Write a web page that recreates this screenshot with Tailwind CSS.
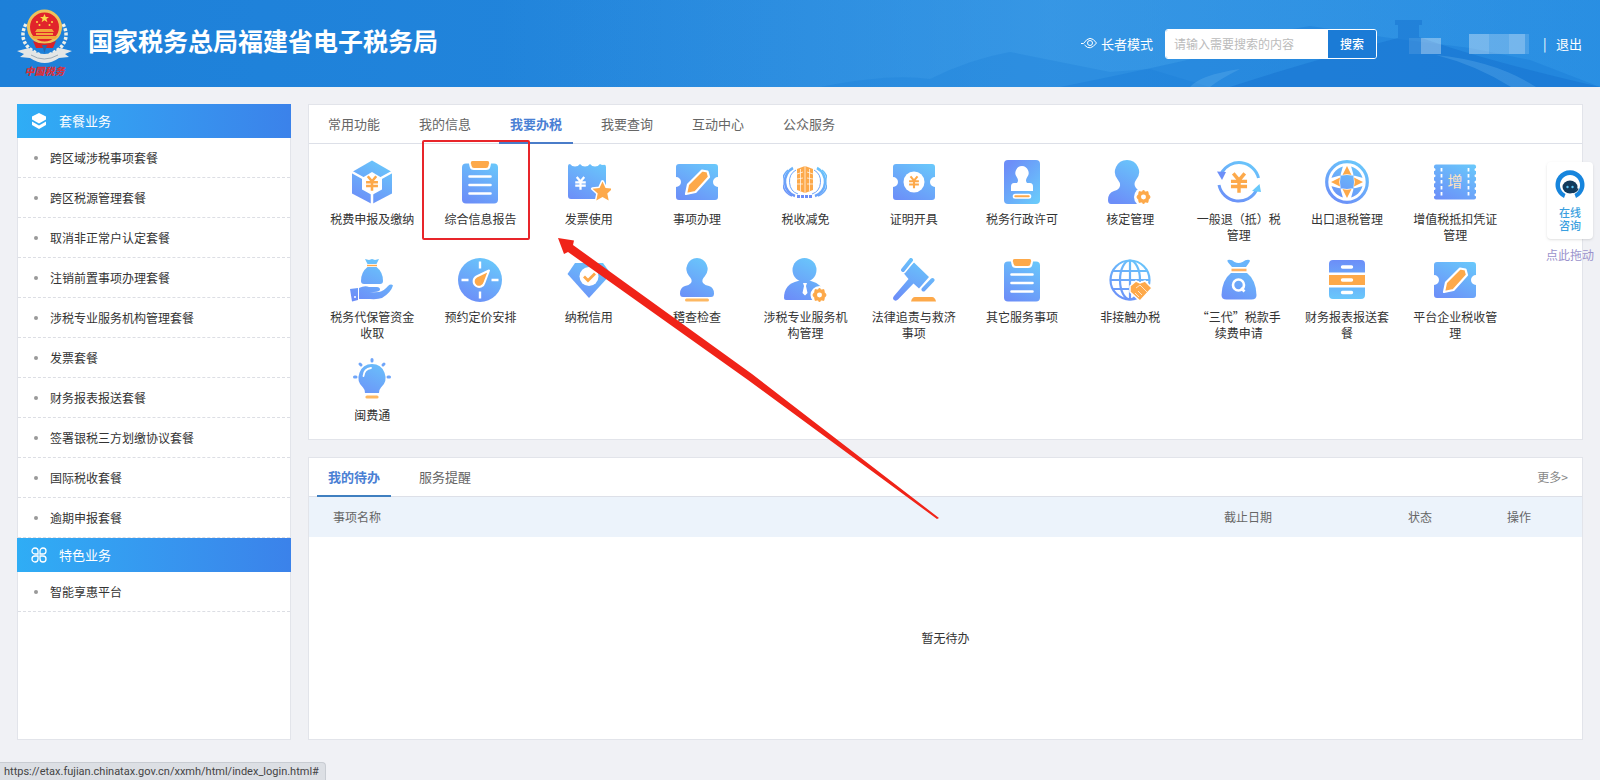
<!DOCTYPE html>
<html lang="zh-CN">

<head>
    <meta charset="UTF-8">
    <meta name="viewport" content="width=device-width, initial-scale=1.0">
    <title>国家税务总局福建省电子税务局</title>
    <script src="https://cdn.jsdelivr.net/npm/@tailwindcss/browser@4"></script>
    <style>
        body {
            font-family: "Noto Sans CJK SC", "Noto Sans", sans-serif;
        }
    </style>
</head>

<body class="relative flex min-h-screen flex-col bg-[#f0f1f5] text-xs text-[#333]">

    <!-- Icon sprite, every symbol is drawn on a 44x44 grid -->
    <svg class="absolute size-0" aria-hidden="true">
        <defs>
            <linearGradient id="g" gradientUnits="userSpaceOnUse" x1="34" y1="0" x2="12" y2="44">
                <stop offset="0" stop-color="#69c9fb" />
                <stop offset="1" stop-color="#6c8ef8" />
            </linearGradient>
            <linearGradient id="gr" gradientUnits="userSpaceOnUse" x1="6" y1="8" x2="40" y2="38">
                <stop offset="0" stop-color="#6c8ef8" />
                <stop offset="1" stop-color="#69c9fb" />
            </linearGradient>
            <linearGradient id="gd" gradientUnits="userSpaceOnUse" x1="22" y1="2" x2="22" y2="42">
                <stop offset="0" stop-color="#6c8ef8" />
                <stop offset="1" stop-color="#69c9fb" />
            </linearGradient>
        </defs>
        <symbol id="yen" viewBox="0 0 20 20">
            <path d="M5 2l5 6 5-6M3 9h14M3 13.500h14M10 8v11" fill="none" stroke="currentColor" stroke-width="3" />
        </symbol>
        <symbol id="gear" viewBox="0 0 18 18">
            <path d="M9 0l2.300 2.600 3.400-.6.6 3.400L18 9l-2.700 3.600-.6 3.400-3.400-.6L9 18l-2.300-2.600-3.400.6-.6-3.400L0 9l2.700-3.600.6-3.400 3.400.6z" fill="#fda94a" stroke="#fda94a" stroke-linejoin="round" />
            <circle cx="9" cy="9" r="3.200" fill="#fff" />
        </symbol>
        <symbol id="cube" viewBox="0 0 44 44">
            <path d="M22 0.500L42 12v21.500L22 44 2 33.500V12z" fill="url(#g)" />
            <path d="M1 11.500L22 23 43 11.500M22 23v21" fill="none" stroke="#fff" stroke-width="2.500" />
            <path d="M22 12l10 6v11.500l-10 5.500-10-5.500V18z" fill="#fff" />
            <use href="#yen" x="13.500" y="14.500" width="17" height="17" color="#fda94a" />
        </symbol>
        <symbol id="clipboard" viewBox="0 0 44 44">
            <rect x="4" y="3.500" width="36" height="40" rx="4" fill="url(#g)" />
            <path d="M14.500 0h15q3 0 2.500 3.500L31.500 6q-.5 3-3.500 3H16q-3 0-3.500-3L12 3.500Q11.500 0 14.500 0z" fill="#fda94a" stroke="#fff" stroke-width="2" />
            <path d="M11.500 16.500h21M11.500 25h21M11.500 33.500h21" stroke="#fff" stroke-width="2.600" stroke-linecap="round" />
        </symbol>
        <symbol id="invoice" viewBox="0 0 44 44">
            <path d="M1 6q0-2 2-2 2 2.500 5 2.500T13 4q2 2.500 5 2.500T23 4q2 2.500 5 2.500T33 4q1 1 3 1Q39 4 39 7v32H4q-3 0-3-3z" fill="url(#g)" />
            <use href="#yen" x="6" y="15" width="15" height="16" color="#fff" />
            <path d="M36 21l3 6.400 7 .8-5.200 4.800 1.400 7L36 36.500 29.800 40l1.400-7L26 28.200l7-.8z" transform="translate(-.5 .5)" fill="#fda94a" stroke="#fff" stroke-width="3" paint-order="stroke" stroke-linejoin="round" />
        </symbol>
        <symbol id="ticket" viewBox="0 0 44 44">
            <path d="M4 4h36q3 0 3 3v10a4.800 4.800 0 0 0 0 10v10q0 3-3 3H4q-3 0-3-3V27a4.800 4.800 0 0 0 0-10V7q0-3 3-3z" fill="url(#g)" />
            <path d="M27 10.500l5.500 1 1.500 5.500-13.500 15-9.500 2 2-9.500z" fill="#fda94a" stroke="#fff" stroke-width="2.200" stroke-linejoin="round" />
        </symbol>
        <symbol id="barrel" viewBox="0 0 44 44">
            <path d="M10 8a14 15 0 0 0 2 28M34 8a14 15 0 0 1-2 28" fill="none" stroke="url(#g)" stroke-width="2.600" />
            <path d="M5 10a14 15 0 0 0 4 26M39 10a14 15 0 0 1-4 26" fill="none" stroke="url(#g)" stroke-width="1.600" />
            <path d="M13 10a12 13 0 0 0 2 24M31 10a12 13 0 0 1-2 24" fill="none" stroke="#6fa5f9" stroke-width="1" />
            <path d="M14 9l8-3 8 3v21l-8 3-8-3z" fill="#fda94a" />
            <path d="M14 14l6-2M14 19l6-1M14 24h6M24 12l6 2M24 18l6 1M24 24h6M22 6v28M17.500 9v22M26.500 9v22" stroke="#fff" stroke-width=".7" />
            <path d="M14 36.500h16" stroke="#6c8ef8" stroke-width="3" stroke-dasharray="3 1" />
        </symbol>
        <symbol id="coin" viewBox="0 0 44 44">
            <path d="M4 4h36q3 0 3 3v10a4.800 4.800 0 0 0 0 10v10q0 3-3 3H4q-3 0-3-3V27a4.800 4.800 0 0 0 0-10V7q0-3 3-3z" fill="url(#g)" />
            <circle cx="22" cy="22" r="10.500" fill="#fff" />
            <use href="#yen" x="15" y="15" width="14" height="14" color="#fda94a" />
        </symbol>
        <symbol id="permit" viewBox="0 0 44 44">
            <rect x="4" y="0" width="36" height="44" rx="4" fill="url(#gr)" />
            <path d="M22 6a7 7 0 0 1 5 11.500q-2 3 0 5.500h3q3 0 3 3.500V31H11v-4.500q0-3.500 3-3.500h3q2-2.500 0-5.500A7 7 0 0 1 22 6z" fill="#fff" />
            <rect x="13.500" y="34.500" width="17" height="3.500" rx="1.700" fill="#fda94a" stroke="#fff" stroke-width="1.600" />
        </symbol>
        <symbol id="usergear" viewBox="0 0 44 44">
            <path d="M19 0a12 12 0 0 1 9 20q-3 4 0 8l8 8-4 8H3q-3 0-3-4 0-7 6-9 5-1 6-5 .5-3-2-6A12 12 0 0 1 19 0z" fill="url(#g)" />
            <circle cx="35.500" cy="37" r="9.500" fill="#fff" />
            <use href="#gear" x="28.500" y="30" width="14" height="14" />
        </symbol>
        <symbol id="refund" viewBox="0 0 44 44">
            <path d="M41.500 18A20 20 0 0 0 4.500 13M2 25a20 20 0 0 0 37.500 5" fill="none" stroke="url(#g)" stroke-width="3" />
            <path d="M0 11.500l9 .5-4 8z" fill="#6c8ef8" />
            <path d="M44 32l-9-1 7.500-7z" fill="#69c9fb" />
            <use href="#yen" x="10" y="11" width="24" height="23" color="#fda94a" />
        </symbol>
        <symbol id="globe" viewBox="0 0 44 44">
            <circle cx="22" cy="22" r="20.300" fill="none" stroke="url(#g)" stroke-width="3.200" />
            <circle cx="22" cy="22" r="16" fill="url(#g)" />
            <path d="M18 6Q12 22 18 38h8q6-16 0-32zM6 18q16-6 32 0v8q-16 6-32 0z" fill="#fff" />
            <path d="M22 6l4.500 9q-4.500-1.500-9 0zM22 38l4.500-9q-4.500 1.500-9 0zM6 22l9-4.500q-1.500 4.500 0 9zM38 22l-9-4.500q1.500 4.500 0 9z" fill="#fda94a" />
            <path d="M17.500 17.500q4.500-1 9 0 1 4.500 0 9-4.500 1-9 0-1-4.500 0-9z" fill="url(#g)" />
        </symbol>
        <symbol id="stub" viewBox="0 0 44 44">
            <rect x="1" y="4.500" width="42" height="35" rx="2" fill="url(#g)" />
            <path d="M1 9.500v27M43 9.500v27" stroke="#fff" stroke-width="3" stroke-linecap="round" stroke-dasharray="0 6.300" />
            <path d="M8.500 8v29M35.500 8v29" stroke="#fff" stroke-width="1.800" stroke-dasharray="3.500 2.500" />
        </symbol>
        <symbol id="handbag" viewBox="0 0 44 44">
            <path d="M15 1l4 1 3-1 3 1 4-1-2.500 5h-9z" fill="#69c0fb" />
            <path d="M17 7.500h10" stroke="#fda94a" stroke-width="1.400" />
            <path d="M17.500 9h9Q33 14 33 23q0 3-3 3H14q-3 0-3-3 0-9 6.500-14z" fill="url(#g)" />
            <path d="M0 31l8-1v12l-6 1.500zM9 30q6-3 10-1h8q3 0 3 2.500 0 2-6 2.500l-4 .5 9-.5q5-1 9-6 3-2.500 5-.5-2 7-11 12.500-4 1.500-12 1H9z" fill="url(#g)" />
            <circle cx="5" cy="39" r="1" fill="#fff" />
        </symbol>
        <symbol id="gauge" viewBox="0 0 44 44">
            <circle cx="22" cy="22" r="22" fill="url(#g)" />
            <path d="M22 3.500v7M22 33.500v7M3.500 22h7M33.500 22h7" stroke="#fff" stroke-width="2.400" />
            <path d="M31 12.500l-4.500 12a5.500 5.500 0 1 1-8-6z" fill="#fda94a" stroke="#fff" stroke-width="2" stroke-linejoin="round" />
        </symbol>
        <symbol id="diamond" viewBox="0 0 44 44">
            <path d="M8 5h28l8 11-22 24L.5 16z" fill="url(#g)" />
            <circle cx="22" cy="18.500" r="9.500" fill="#fff" />
            <path d="M17 18.500l4 4 7-7" fill="none" stroke="#fda94a" stroke-width="2.800" />
        </symbol>
        <symbol id="stamp" viewBox="0 0 44 44">
            <path d="M22 0a11 11 0 0 1 8 18q-4 4-2 7 2 2.500 6 3 5 1.500 5 7.500 0 3.500-3 3.500H8q-3 0-3-3.500 0-6 5-7.500 4-.5 6-3 2-3-2-7A11 11 0 0 1 22 0z" fill="url(#g)" />
            <path d="M11.500 42h21" stroke="#fdb862" stroke-width="3" stroke-linecap="round" />
        </symbol>
        <symbol id="agent" viewBox="0 0 44 44">
            <circle cx="21.500" cy="12" r="12" fill="url(#g)" />
            <path d="M1 40q0-14 14-17h13q12 3 13 14l-5 5H3q-2 0-2-2z" fill="url(#g)" />
            <path d="M20 25h4l-1 3 1.500 7-2.500 2.500-2.500-2.500 1.500-7z" fill="#fff" />
            <circle cx="36.500" cy="37" r="9" fill="#fff" />
            <use href="#gear" x="29.500" y="30" width="14" height="14" />
        </symbol>
        <symbol id="gavel" viewBox="0 0 44 44">
            <path d="M22 4.500L37 19l-10 11.500-5.500-5L6 41.500q-2 2-4 .5t0-4L16.500 21 11.500 15z" fill="url(#g)" />
            <path d="M11 12l8-10M31.500 31.500L40.500 22" stroke="#fff" stroke-width="7" stroke-linecap="round" />
            <path d="M11 12l8-10M31.500 31.500L40.500 22" stroke="url(#g)" stroke-width="4" stroke-linecap="round" />
            <path d="M19 43.500q1-4.500 4-4.500h17q3 0 4 4.500z" fill="#fda94a" />
        </symbol>
        <symbol id="world" viewBox="0 0 44 44">
            <g fill="none" stroke="url(#g)" stroke-width="2.200">
                <circle cx="22" cy="22" r="19.500" />
                <ellipse cx="22" cy="22" rx="10" ry="19.500" />
                <path d="M22 2.500V41.500M2.500 22H41.500M5 13h34M5 31h34" />
            </g>
            <path d="M22 28l6-5 4 2 5-2 7 7-12 13-10-9z" fill="#fda94a" stroke="#fff" stroke-width="1.500" />
            <path d="M28 30l4-3 8 8M27 35l4 4M30 33l4 4" fill="none" stroke="#fff" stroke-width=".7" />
        </symbol>
        <symbol id="searchbag" viewBox="0 0 44 44">
            <path d="M10.500 2q4-1 7 2 4 2 8 0 4-3 7-2 1 1-1 3.500L29 9H15l-3-3.500q-2-2-1.500-3.500z" fill="#69b4fb" />
            <path d="M14.500 12h15" stroke="#fdb366" stroke-width="2.600" />
            <path d="M14 15h16q9 7 9.500 22 0 4.500-5 4.500h-25q-5 0-5-4.500Q5 22 14 15z" fill="url(#g)" />
            <circle cx="21.500" cy="27" r="5.500" fill="none" stroke="#fff" stroke-width="2.600" />
            <path d="M24 30l3.500 3.500" stroke="#fff" stroke-width="2.600" />
        </symbol>
        <symbol id="drawers" viewBox="0 0 44 44">
            <path d="M4 14.500V6q0-4 4-4h28q4 0 4 4v8.500zM4 29.500h36V37q0 4-4 4H8q-4 0-4-4z" fill="url(#gd)" />
            <path d="M4 17h36v10H4z" fill="#fda94a" />
            <path d="M17.500 9h9M17.500 22h9M17.500 34.500h9" stroke="#fff" stroke-width="3.400" stroke-linecap="round" />
        </symbol>
        <symbol id="bulb" viewBox="0 0 44 44">
            <path d="M22 8a13.500 13.500 0 0 1 9 23.500q-2 2-2 5.500H15q0-3.500-2-5.500A13.500 13.500 0 0 1 22 8z" fill="url(#g)" />
            <path d="M13.500 20q.5-7 7.500-8" fill="none" stroke="#fff" stroke-width="1.800" stroke-linecap="round" />
            <path d="M17 41h10" stroke="#fdb862" stroke-width="3.200" stroke-linecap="round" />
            <path d="M22 3.500v1.500M10 8l1 1M34 8l-1 1M4.500 21H6M38 21h1.500" stroke="#6fa5f9" stroke-width="3" stroke-linecap="round" />
        </symbol>
    </svg>

    <header class="relative flex h-[87px] items-center justify-between bg-linear-to-r from-[#1d80d9] via-[#2386dc] to-[#2189e0] pr-[18px] pl-[17px]">
        <!-- Mountains and wall tower -->
        <svg class="absolute inset-0 size-full" viewBox="0 0 1600 87" preserveAspectRatio="xMaxYMax slice" aria-hidden="true">
            <defs>
                <linearGradient id="sky" x1="0" x2="1">
                    <stop offset="0" stop-color="#4aa6ec" stop-opacity="0" />
                    <stop offset=".5" stop-color="#4aa6ec" stop-opacity=".5" />
                    <stop offset="1" stop-color="#4aa6ec" stop-opacity=".2" />
                </linearGradient>
            </defs>
            <path d="M500 0h1100v87H500z" fill="url(#sky)" />
            <path d="M820 87q70-14 110-8 40-20 80-27l40 8 60 12 40-3 60 18z" fill="#1b7dd8" opacity=".3" />
            <path d="M1060 87q80-16 140-30 60-24 110-31 40 6 80 12l80 10 60 12 70 27z" fill="#1a7ad6" opacity=".4" />
            <path d="M1395 20h27v5h-3v12q60 22 181 50h-370q80-26 168-49V25h-3z" fill="#1672cf" opacity=".5" />
            <path d="M1436 55q40 10 75 32h25q-40-26-100-32zM1190 87q10-12 50-18-20 10-30 18z" fill="#6bb6f0" opacity=".3" />
        </svg>

        <div class="relative flex items-center gap-4">
            <svg class="h-[70px] w-[55px]" viewBox="0 0 55 70" role="img" aria-label="中国税务">
                <g fill="none" stroke="#eef0ea" stroke-width="3.500" stroke-dasharray="3 1.500">
                    <path d="M9 15Q2 28 11 38q6 6 15 9" />
                    <path d="M46 15q7 13-2 23-6 6-15 9" />
                </g>
                <circle cx="27.500" cy="18" r="16" fill="#e1242b" stroke="#eec25b" stroke-width="3" />
                <path d="M27.500 5l1.300 3h3.200l-2.600 2 1 3.200-2.900-2-2.900 2 1-3.200-2.600-2h3.200z" fill="#fbd94a" />
                <g fill="#fbd94a">
                    <circle cx="20" cy="13" r="1" />
                    <circle cx="22.500" cy="16" r="1" />
                    <circle cx="32.500" cy="16" r="1" />
                    <circle cx="35" cy="13" r="1" />
                </g>
                <path d="M20 20h15l2 3H18zM19 24h17v2H19zM14 27h27l-3 3H17z" fill="#f3a73a" />
                <path d="M16 32q11.500 5 23 0l-3 7H19z" fill="#d92228" />
                <path d="M25 36h5l-2.500 8z" fill="#2c64a8" />
                <path d="M0 42l12-3q15 12 31 0l12 3-7 3 4 3-10 1q-14 10-29 0l-10-1 4-3z" fill="#e3e6e6" />
                <path d="M14 46q13 8 27 0" fill="none" stroke="#9eabb5" />
                <text x="27.500" y="66" text-anchor="middle" font-size="10" font-weight="900" font-style="italic" fill="#d8303a">中国税务</text>
            </svg>
            <h1 class="pb-2 text-[25px] leading-8 font-bold text-white">国家税务总局福建省电子税务局</h1>
        </div>

        <div class="relative flex items-center text-[13px] text-white">
            <a href="#" class="flex items-center gap-1">
                <svg class="h-3 w-4" viewBox="0 0 16 12" fill="none" stroke="#fff" aria-hidden="true">
                    <path d="M0 6.500h2.500Q9-3.500 15.500 6 9 14.500 3.500 8" />
                    <circle cx="9" cy="6" r="2.500" />
                </svg>
                长者模式
            </a>
            <form class="ml-3 flex h-[30px] overflow-hidden rounded-[3px] border border-white text-xs">
                <input type="text" aria-label="搜索内容" placeholder="请输入需要搜索的内容" class="w-[162px] bg-white px-2 text-[#333] outline-none placeholder:text-[#bbb]">
                <button type="button" class="w-12 bg-[#1b7bd6] font-medium">搜索</button>
            </form>
            <!-- Masked user name -->
            <div class="ml-8 flex w-[122px] gap-7" aria-hidden="true">
                <div class="flex h-5 w-8 items-end">
                    <span class="h-4 w-3 bg-white/10"></span>
                    <span class="h-4 w-5 bg-white/35"></span>
                </div>
                <div class="flex h-5 w-[62px]">
                    <span class="h-5 w-5 bg-white/35"></span>
                    <span class="h-5 w-5 bg-white/25"></span>
                    <span class="h-5 w-4 bg-white/35"></span>
                    <span class="h-5 w-1 bg-white/15"></span>
                </div>
            </div>
            <span class="ml-3 w-[13px]">|</span>
            <a href="#">退出</a>
        </div>
    </header>

    <div class="flex gap-[17px] px-[17px] pt-[17px] pb-10">
        <aside class="w-[274px] shrink-0 border border-t-0 border-[#e2e4ea] bg-white">
            <h2 class="-mx-px flex h-[34px] items-center gap-3 bg-linear-to-r from-[#2fadf5] to-[#3b82ea] px-[14px] text-[13px] text-white">
                <svg class="size-4" viewBox="0 0 16 16" aria-hidden="true">
                    <path d="M8 0l7 3.500v3L8 10.500 1 6.500v-3z" fill="#fff" />
                    <path d="M1 8.500l7 4 7-4v3.500l-7 4-7-4z" fill="#fff" />
                </svg>
                套餐业务
            </h2>
            <ul id="packages"></ul>
            <h2 class="-mx-px flex h-[34px] items-center gap-3 bg-linear-to-r from-[#2fadf5] to-[#3b82ea] px-[14px] text-[13px] text-white">
                <svg class="size-4" viewBox="0 0 16 16" fill="none" stroke="#fff" stroke-width="1.300" aria-hidden="true">
                    <path d="M7 7H4a3 3 0 1 1 3-3zM9 7V4a3 3 0 1 1 3 3zM7 9v3a3 3 0 1 1-3-3zM9 9h3a3 3 0 1 1-3 3z" />
                </svg>
                特色业务
            </h2>
            <ul id="features"></ul>
        </aside>

        <main class="flex min-w-0 flex-1 flex-col gap-[17px]">
            <section class="border border-[#e2e4ea] bg-white">
                <nav class="flex h-[39px] gap-[17px] border-b border-[#dde0e8] px-2 text-[13px] text-[#666]">
                    <a href="#" class="flex w-[74px] items-center justify-center">常用功能</a>
                    <a href="#" class="flex w-[74px] items-center justify-center">我的信息</a>
                    <a href="#" class="-mb-px flex w-[74px] items-center justify-center border-b-2 border-[#4a7cc9] font-bold text-[#4a80d4]">我要办税</a>
                    <a href="#" class="flex w-[74px] items-center justify-center">我要查询</a>
                    <a href="#" class="flex w-[74px] items-center justify-center">互动中心</a>
                    <a href="#" class="flex w-[74px] items-center justify-center">公众服务</a>
                </nav>
                <div id="services" class="grid w-[94.3%] grid-cols-11 gap-y-[15px] py-4 pl-[9px]"></div>
            </section>

            <section class="border border-[#e2e4ea] bg-white">
                <nav class="flex h-[39px] gap-[17px] border-b border-[#dde0e8] px-2 text-[13px] text-[#666]">
                    <a href="#" class="-mb-px flex w-[74px] items-center justify-center border-b-2 border-[#3f7fc0] font-bold text-[#4a80d4]">我的待办</a>
                    <a href="#" class="flex w-[74px] items-center justify-center">服务提醒</a>
                    <a href="#" class="mr-1.5 ml-auto flex items-center text-xs text-[#888]">更多&gt;</a>
                </nav>
                <table class="w-full table-fixed text-left text-[#666]">
                    <thead class="bg-[#ecf3fb]">
                        <tr class="h-10">
                            <th class="pl-6 font-normal">事项名称</th>
                            <th class="w-[184px] font-normal">截止日期</th>
                            <th class="w-[99px] font-normal">状态</th>
                            <th class="w-[75px] font-normal">操作</th>
                        </tr>
                    </thead>
                    <tbody>
                        <tr>
                            <td colspan="4" class="h-[202px] text-center text-[#333]">暂无待办</td>
                        </tr>
                    </tbody>
                </table>
            </section>
        </main>
    </div>

    <!-- Floating online help -->
    <div class="absolute top-[162px] right-1.5 flex flex-col items-center">
        <a href="#" class="flex h-[77px] w-[46px] flex-col items-center rounded-sm bg-white pt-2 text-[11px] leading-[13px] font-medium text-[#3a9fe0] shadow">
            <svg class="mb-1.5 size-[30px]" viewBox="0 0 30 30" aria-hidden="true">
                <path d="M9 28A14.500 14.500 0 1 1 21 28l-1.500-4a10 10 0 1 0-9 0z" fill="#1785dd" />
                <ellipse cx="15" cy="17" rx="7.500" ry="6.500" fill="#123a5c" />
                <circle cx="12.500" cy="17" r="1.200" fill="#5cc4f5" />
                <circle cx="17.500" cy="17" r="1.200" fill="#5cc4f5" />
                <path d="M18 22.500q4-1 5-4" fill="none" stroke="#123a5c" stroke-width="1.500" />
            </svg>
            <span>在线</span>
            <span>咨询</span>
        </a>
        <span class="mt-2 text-[#9a92cc]">点此拖动</span>
    </div>

    <!-- Highlight and arrow -->
    <div class="pointer-events-none absolute top-[140px] left-[422px] h-[100px] w-[108px] rounded-xs border-2 border-[#e8252a]"></div>
    <svg class="pointer-events-none absolute top-[230px] left-[550px] h-[300px] w-[400px]" viewBox="550 230 400 300" aria-hidden="true">
        <path d="M558 238L574 240.500 573 245 752 374 939 518 937 519 748 380 568 252 564 254z" fill="#f02318" />
    </svg>

    <div class="fixed bottom-0 left-0 rounded-tr-sm border-t border-r border-[#c8ccd2] bg-[#dcdfe4] pr-1.5 pl-1 font-['Roboto','Noto_Sans',sans-serif] text-[11px] leading-[17px] text-[#444]">https://etax.fujian.chinatax.gov.cn/xxmh/html/index_login.html#</div>

    <script>
        const packages = ['跨区域涉税事项套餐', '跨区税源管理套餐', '取消非正常户认定套餐', '注销前置事项办理套餐', '涉税专业服务机构管理套餐',
            '发票套餐', '财务报表报送套餐', '签署银税三方划缴协议套餐', '国际税收套餐', '逾期申报套餐'];
        const features = ['智能享惠平台'];

        // [symbol id, label, character drawn over the icon]
        const services = [
            ['cube', '税费申报及缴纳'],
            ['clipboard', '综合信息报告'],
            ['invoice', '发票使用'],
            ['ticket', '事项办理'],
            ['barrel', '税收减免'],
            ['coin', '证明开具'],
            ['permit', '税务行政许可'],
            ['usergear', '核定管理'],
            ['refund', '一般退（抵）税管理'],
            ['globe', '出口退税管理'],
            ['stub', '增值税抵扣凭证管理', '增'],
            ['handbag', '税务代保管资金收取'],
            ['gauge', '预约定价安排'],
            ['diamond', '纳税信用'],
            ['stamp', '稽查检查'],
            ['agent', '涉税专业服务机构管理'],
            ['gavel', '法律追责与救济事项'],
            ['clipboard', '其它服务事项'],
            ['world', '非接触办税'],
            ['searchbag', '“三代”税款手续费申请'],
            ['drawers', '财务报表报送套餐'],
            ['ticket', '平台企业税收管理'],
            ['bulb', '闽费通']
        ];

        function renderMenu(id, items) {
            document.getElementById(id).innerHTML = items.map(text => `
                <li class="h-10 border-b border-dashed border-[#dcdee4]">
                    <a href="#" class="flex h-full items-center gap-3 pl-4">
                        <span class="size-1 rounded-full bg-[#999]"></span>${text}
                    </a>
                </li>`).join('');
        }

        renderMenu('packages', packages);
        renderMenu('features', features);

        document.getElementById('services').innerHTML = services.map(([icon, text, mark]) => `
            <a href="#" class="flex flex-col items-center gap-[7px] px-3 text-center leading-4">
                <svg class="size-11 overflow-visible" aria-hidden="true">
                    <use href="#${icon}"></use>
                    ${mark ? `<text x="22" y="27" text-anchor="middle" font-size="15" fill="#ffe3c0">${mark}</text>` : ''}
                </svg>
                <span>${text}</span>
            </a>`).join('');
    </script>

</body>

</html>
